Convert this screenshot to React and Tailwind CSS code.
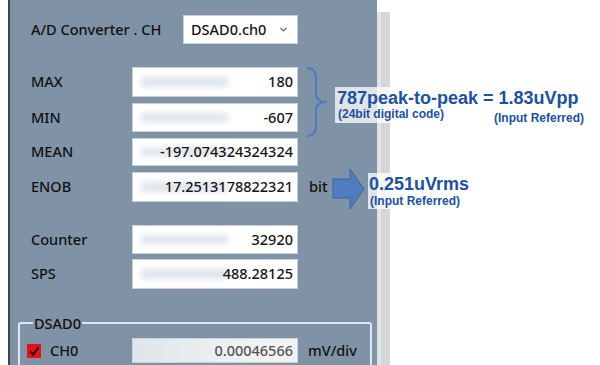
import { ChevronDown } from 'lucide-react';

const field =
  'relative flex items-center justify-end w-[166px] bg-white border border-[#c9d1d9] pr-[4px] text-[14.5px] text-[#151515] overflow-hidden';

function Smudge() {
  return <div className="absolute left-[8px] right-[42%] top-[9px] bottom-[9px] bg-[#dde4ec] blur-[3px]" />;
}

function Row({ label, value, h = 'h-[29px]', mt, unit }) {
  return (
    <div className={`flex items-center ml-[13px] ${mt}`}>
      <div className="w-[101px] text-[14.5px] text-[#111]">{label}</div>
      <div className={`${field} ${h}`}>
        <Smudge />
        <span className="relative">{value}</span>
      </div>
      {unit && <span className="ml-[11px] text-[14.5px] text-[#111]">{unit}</span>}
    </div>
  );
}

export default function App() {
  return (
    <div className="relative w-[600px] h-[365px] overflow-hidden bg-white flex font-['Noto_Sans',sans-serif] font-medium">
      <div className="w-[8px]" />
      <div className="w-[369px] h-full bg-[#8093a6] border-l-2 border-[#3b4753] pl-[8px] pt-[15px] flex flex-col">
        <div className="flex items-center ml-[13px]">
          <div className="w-[152px] text-[14.5px] text-[#111]">A/D Converter . CH</div>
          <div className="flex items-center justify-between w-[115px] h-[29px] bg-white border border-[#c9d1d9] pl-[7px] pr-[8px] text-[14.5px] text-[#151515]">
            <span>DSAD0.ch0</span>
            <ChevronDown size={11} strokeWidth={2.5} className="text-[#555]" />
          </div>
        </div>

        <Row label="MAX" value="180" h="h-[30px]" mt="mt-[23px]" />
        <Row label="MIN" value="-607" mt="mt-[6px]" />
        <Row label="MEAN" value="-197.074324324324" h="h-[28px]" mt="mt-[6px]" />
        <Row label="ENOB" value="17.2513178822321" h="h-[30px]" mt="mt-[6px]" unit="bit" />
        <Row label="Counter" value="32920" mt="mt-[23px]" />
        <Row label="SPS" value="488.28125" h="h-[30px]" mt="mt-[5px]" />

        <fieldset className="mt-[24px] w-[354px] border-2 border-[#dfe6ee] rounded-[3px] pl-[7px] pb-[20px]">
          <legend className="ml-[6px] px-[1px] text-[14.5px] text-[#111] leading-[20px]">DSAD0</legend>
          <div className="flex items-center mt-[5px]">
            <div className="flex items-center w-[105px]">
              <svg width="14" height="14" viewBox="0 0 14 14">
                <rect x="0" y="0" width="14" height="14" fill="#e01414" />
                <path d="M3 7.5 L6 10.5 L11.5 3.5" stroke="#3a0a0a" strokeWidth="2.2" fill="none" />
              </svg>
              <span className="ml-[9px] text-[14.5px] text-[#111]">CH0</span>
            </div>
            <div className="flex items-center justify-end w-[166px] h-[25px] bg-[linear-gradient(90deg,#dfe5ea,#eef1f3_60%,#f2f2f2)] border border-[#c9d1d9] pr-[4px] text-[14.5px] text-[#555]">
              0.00046566
            </div>
            <span className="ml-[10px] text-[14.5px] text-[#111]">mV/div</span>
          </div>
        </fieldset>
      </div>
      <div className="w-[13px] flex flex-col">
        <div className="h-[12px]" />
        <div className="flex-1 bg-[#d6d6d6] border-l-[4px] border-[#e4e4e4]" />
      </div>

      <svg className="absolute left-0 top-0" width="600" height="365">
        <path
          d="M307 68 Q316 68 316 78 L316 94 Q316 102 327 102 Q316 102 316 110 L316 126 Q316 136 307 136"
          stroke="#4b7bc2"
          strokeWidth="2"
          fill="none"
        />
        <polygon
          points="333,179 350,179 350,169 364,189 350,209 350,198 333,198"
          fill="#4f7dbd"
          stroke="#3b64a0"
          strokeWidth="1"
        />
      </svg>

      <div className="absolute left-[335px] top-[87px] w-[265px] h-[36px] bg-white/75" />
      <div className="absolute left-[368px] top-[173px] w-[102px] h-[36px] bg-white/75" />

      <div className="absolute inset-0 font-['Liberation_Sans',Arial,sans-serif] font-bold text-[#21509e] leading-none">
        <div className="absolute left-[337px] top-[89px] text-[18px] whitespace-nowrap">787peak-to-peak = 1.83uVpp</div>
        <div className="absolute left-[338px] top-[108px] text-[12px] whitespace-nowrap">(24bit digital code)</div>
        <div className="absolute left-[494px] top-[112px] text-[12px] whitespace-nowrap">(Input Referred)</div>
        <div className="absolute left-[369px] top-[175px] text-[18px] whitespace-nowrap">0.251uVrms</div>
        <div className="absolute left-[370px] top-[195px] text-[12px] whitespace-nowrap">(Input Referred)</div>
      </div>
    </div>
  );
}
